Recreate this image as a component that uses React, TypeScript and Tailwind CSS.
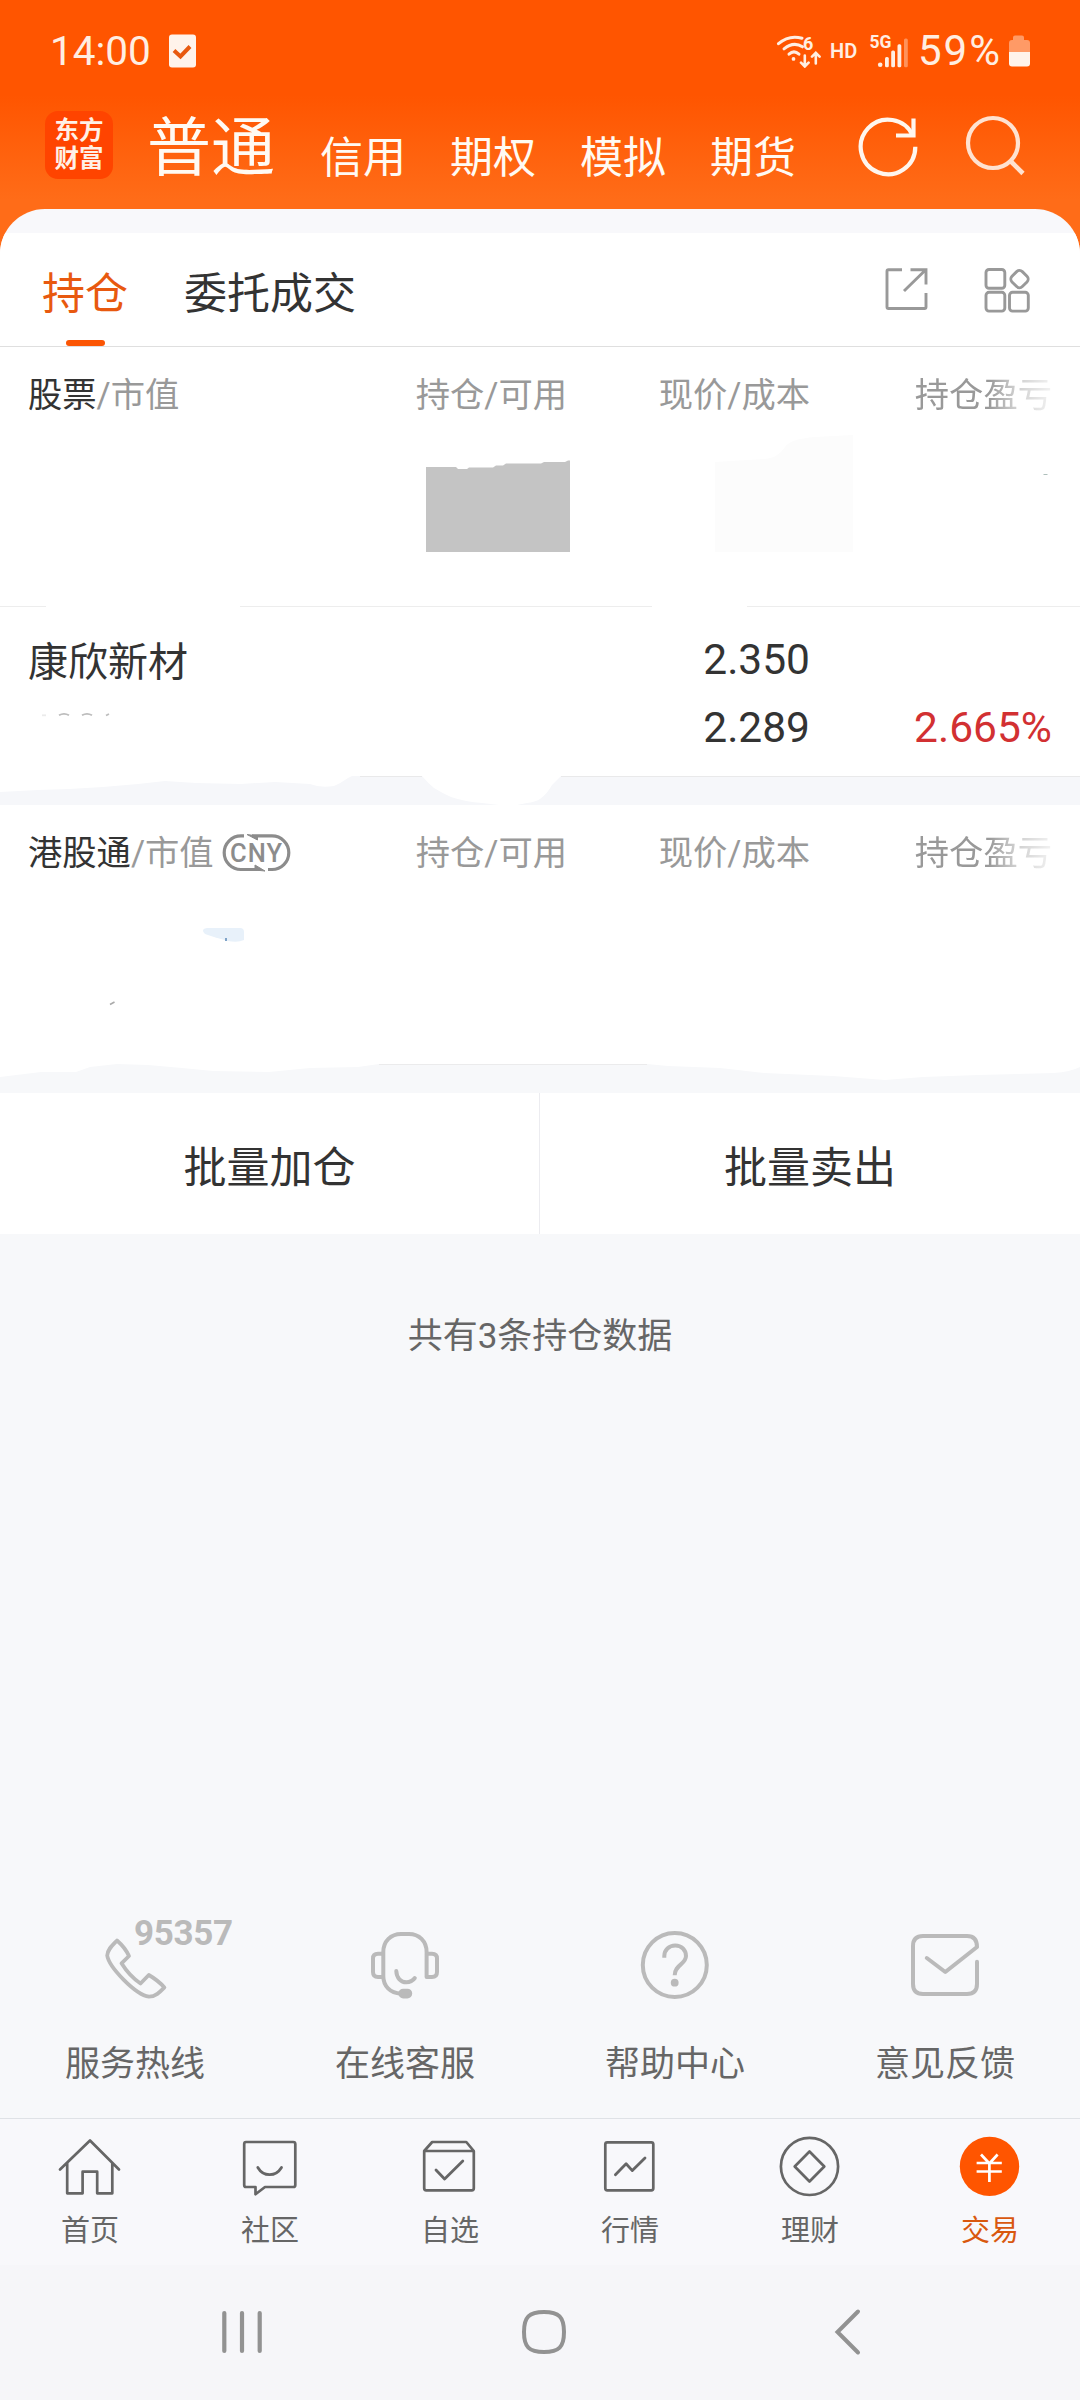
import type { ReactNode } from "react";

const FONT = "font-[Roboto,'Noto_Sans_CJK_SC',sans-serif]";

function StatusBar() {
  return (
    <div className="flex h-[102px] items-center pl-[50px] text-[#ffeee2]">
      <span className="w-[103px] text-[40.500px] leading-[41px] whitespace-nowrap">14:00</span>
      <svg className="ml-[15px]" width="30" height="36" viewBox="0 0 30 36">
        <rect x="1" y="1.500" width="27" height="33" rx="3" fill="#fff3eb" />
        <path d="M6 17.500l6.500 6L22 13.500" fill="none" stroke="#e8590f" strokeWidth="4" />
      </svg>
      <svg className="ml-[578px]" width="46" height="34" viewBox="0 0 46 34" fill="none" stroke="#ffeee2" strokeWidth="3" strokeLinecap="round">
        <path d="M2.500 9.700Q13 .5 26 4.200" />
        <path d="M8 14.900Q17.500 7 26.500 12.800" />
        <path d="M13 20.200Q18 15.600 23 20.200" />
        <circle cx="17.500" cy="24.900" r="1.900" fill="#ffeee2" stroke="none" />
        <path d="M28.800 21.500v10.500M25 28.700l3.800 3.800 3.800-3.800M39.800 29.500V19.500M36 22.700l3.800-3.800 3.800 3.800" strokeWidth="2.600" />
        <text x="27" y="15.500" fontSize="18" fontWeight="700" fill="#ffeee2" stroke="none">6</text>
      </svg>
      <span className="ml-[8px] w-[28px] text-[20px] leading-[20px] font-semibold">HD</span>
      <svg className="ml-[10px] overflow-visible" width="42" height="40" viewBox="0 -3 42 40" fill="#ffeee2">
        <text x="1.500" y="14.300" fontSize="18" fontWeight="700" textLength="22" lengthAdjust="spacingAndGlyphs">5G</text>
        <circle cx="12.200" cy="30.800" r="2.300" />
        <rect x="17" y="23" width="3.800" height="10.300" rx="1.500" />
        <rect x="23.200" y="16.600" width="3.800" height="16.700" rx="1.500" />
        <rect x="29.500" y="10.300" width="3.800" height="23" rx="1.500" />
        <rect x="36" y="4.600" width="3.800" height="28.700" rx="1.500" opacity=".4" />
      </svg>
      <span className="ml-[8px] w-[86px] text-[42px] leading-[42px] tracking-[2px] whitespace-nowrap">59%</span>
      <svg className="ml-[4px]" width="24" height="34" viewBox="0 0 24 34">
        <path d="M7 1.500h7q2 0 2 2V6h3q3 0 3 3v9H1V9q0-3 3-3h1V3.500q0-2 2-2z" fill="#ff9a66" />
        <path d="M1 18h21v11.500q0 3-3 3H4q-3 0-3-3z" fill="#fff3eb" />
      </svg>
    </div>
  );
}

function AccountNav() {
  return (
    <div className="flex h-[107px] items-start pl-[45px] text-[#fffaf3]">
      <div className="mt-[9px] flex h-[68px] w-[68px] flex-col items-center rounded-[13px] bg-[#ff4400] pt-[6px] text-[24.500px] leading-[28px] font-bold text-[#fff0e6]">
        <span>东方</span>
        <span>财富</span>
      </div>
      <span className="mt-[15px] ml-[34px] w-[127px] text-[64px] leading-[64px] whitespace-nowrap">普通</span>
      <div className="mt-[35px] ml-[46px] flex gap-[44px] text-[43px] leading-[43px] whitespace-nowrap">
        <span>信用</span>
        <span>期权</span>
        <span>模拟</span>
        <span>期货</span>
      </div>
      <svg className="mt-[14px] ml-[62px]" width="61" height="61" viewBox="0 0 61 61" fill="none" stroke="#fff6ee" strokeWidth="4.200">
        <path d="M57.300 30.800A27.300 27.300 0 1 1 54.800 19.500" />
        <path d="M55.500 2.500V19.500H38" />
      </svg>
      <svg className="mt-[13px] ml-[46px]" width="61" height="61" viewBox="0 0 61 61" fill="none" stroke="#ffe2d0" strokeWidth="4.200">
        <circle cx="28" cy="28" r="25" />
        <path d="M45.500 46L58 58.500" strokeWidth="4.600" />
      </svg>
    </div>
  );
}

function Tabs() {
  return (
    <div className="flex h-[114px] items-start border-b border-[#dfdfdf] bg-white pr-[47px] pl-[42px] text-[43px] leading-[43px] whitespace-nowrap">
      <div className="flex flex-col items-center pt-[40px] text-[#e8590f]">
        <span>持仓</span>
        <span className="mt-[24px] h-[6px] w-[39px] rounded-full bg-[#fb5504]" />
      </div>
      <span className="mt-[40px] ml-[56px] text-[#333]">委托成交</span>
      <svg className="mt-[34px] ml-auto" width="46" height="46" viewBox="0 0 46 46" fill="none" stroke="#999" strokeWidth="2.900">
        <path d="M18 2.700H4.500Q3 2.700 3 4.200V40Q3 41.500 4.500 41.500H40.500Q42 41.500 42 40V26" />
        <path d="M26.500 2.700H42V17.500M20 24L41.500 3" />
      </svg>
      <svg className="mt-[34px] ml-[54px]" width="49" height="46" viewBox="0 0 49 46" fill="none" stroke="#999" strokeWidth="2.900">
        <rect x="2" y="2.500" width="18.800" height="18.800" rx="3" />
        <rect x="2" y="25.300" width="18.800" height="18.800" rx="3" />
        <rect x="25.500" y="25.300" width="18.800" height="18.800" rx="3" />
        <rect x="28.200" y="4.800" width="14.600" height="14.600" rx="4" transform="rotate(45 35.500 12.100)" />
      </svg>
    </div>
  );
}

function TableHead({ title, children }: { title: string; children?: ReactNode }) {
  return (
    <div className="flex h-[34px] items-center pl-[28px] text-[34.300px] leading-[34px] whitespace-nowrap text-[#999]">
      <span className="flex w-[296px] items-center">
        <span className="text-[#333]">{title}</span>/市值
        {children}
      </span>
      <span className="w-[243px] text-right">持仓/可用</span>
      <span className="w-[243px] text-right">现价/成本</span>
      <span className="flex w-[242px] justify-end">
        <span className="[mask-image:linear-gradient(to_right,black_54%,rgba(0,0,0,0.5)_72%,rgba(0,0,0,0.12))]">持仓盈亏</span>
      </span>
    </div>
  );
}

function CnyBadge() {
  return (
    <svg className="ml-[8px] shrink-0" width="70" height="38" viewBox="0 0 70 38">
      <g fill="none" stroke="#8c8c8c" strokeWidth="3.200">
        <path d="M22 1.900H19A16.800 16.800 0 0 0 19 35.500H39" />
        <path d="M30 1.900H50A16.800 16.800 0 0 1 50 35.500H46" />
      </g>
      <path d="M25 .5L35.500 6V2zM43 37L33 31v5z" fill="#8c8c8c" stroke="#8c8c8c" />
      <text x="8" y="27.800" fontSize="25.500" fontWeight="500" textLength="52" fill="#8c8c8c">CNY</text>
    </svg>
  );
}

function StockSection() {
  return (
    <section className="bg-white">
      <div className="relative h-[259px] pt-[31px]">
        <TableHead title="股票" />
        <svg className="absolute top-0 left-0" width="1080" height="259" viewBox="0 347 1080 259">
          <path d="M426 467H456L458 469H467L469 467.500H493L496 465.500H503L506 463.500H541L544 462H565L568 460.500H570V552H426z" fill="#c4c4c4" />
          <path d="M715 462L765 459Q778 458 785 447Q790 439 815 437L853 435V552H715z" fill="#fcfcfc" />
          <path d="M1043.500 474.500h4" stroke="#aebfbb" strokeWidth="1" />
        </svg>
      </div>
      <div className="flex h-px">
        <span className="w-[46px] bg-[#ededed]" />
        <span className="ml-[194px] w-[412px] bg-[#ededed]" />
        <span className="ml-[95px] flex-1 bg-[#ededed]" />
      </div>
      <div className="flex h-[169px] items-start pl-[28px] text-[#333]">
        <div className="w-[539px] pt-[36px]">
          <div className="text-[40px] leading-[40px]">康欣新材</div>
          <svg className="mt-[29px] ml-[8px]" width="90" height="6" viewBox="0 0 90 6" fill="none" stroke="#bdbdbd" strokeWidth="1.800">
            <path d="M6 3.300h4" opacity=".3" />
            <path d="M23 3.300Q28 .3 33 3.300M46 3.300Q51 .3 56 3.300M70 3.500l3-1.500" />
          </svg>
        </div>
        <div className="mt-[19px] w-[243px] text-right text-[42.500px] leading-[68px]">
          <div>2.350</div>
          <div>2.289</div>
        </div>
        <div className="mt-[87px] w-[242px] text-right text-[42.500px] leading-[68px] text-[#d23032]">2.665%</div>
      </div>
      <svg className="block" width="1080" height="29" viewBox="0 776 1080 29">
        <path
          d="M0 792L38 790L69 789L103 787L138 784L165 781L196 783L241 784L275 782L310 784Q320 788 334 786Q341 783 348 778L352 776H422Q428 783 434 788Q442 793 451 797Q466 802 482 803L499 805H517L527 803Q535 802 540 799Q547 794 552 785L561 776H1080V805H0z"
          fill="#f6f7fa"
        />
        <path d="M360 776.500H422M561 776.500H1080" stroke="#e9e9ea" strokeWidth="1" />
      </svg>
    </section>
  );
}

function HongKongSection() {
  return (
    <section className="bg-white">
      <div className="relative h-[259px] pt-[31px]">
        <TableHead title="港股通">
          <CnyBadge />
        </TableHead>
        <svg className="absolute top-[60px] left-0" width="300" height="160" viewBox="0 865 300 160">
          <path d="M207 928H240Q244 928 244 932V940Q238 943 228 941Q213 937 205 934Q200 929 207 928z" fill="#e8f1fa" />
          <path d="M226 938v3" stroke="#7fa3c8" strokeWidth="2" />
          <path d="M110 1004.500l4.500-2.500" stroke="#aaa" strokeWidth="1.600" />
        </svg>
      </div>
      <svg className="block" width="1080" height="29" viewBox="0 1064 1080 29">
        <path
          d="M0 1077L41 1072L76 1072L90 1067L117 1064L148 1065L182 1068L213 1071L269 1072L310 1068L358 1067L379 1064H647L668 1066L720 1068L764 1073L833 1076L885 1080L923 1077L978 1075L1054 1073Q1070 1072 1080 1067V1093H0z"
          fill="#f7f8fa"
        />
        <path d="M379 1064.500H647" stroke="#ebebec" strokeWidth="1" />
      </svg>
    </section>
  );
}

function BatchActions() {
  return (
    <div className="flex h-[141px] bg-white text-[43px] leading-[43px] text-[#333]">
      <div className="flex w-[540px] items-center justify-center border-r border-[#ececf0] pt-[10px]">批量加仓</div>
      <div className="flex w-[540px] items-center justify-center pt-[10px]">批量卖出</div>
    </div>
  );
}

const services = [
  {
    label: "服务热线",
    icon: (
      <path d="M17 10.500C21 14 26.500 20.500 29 26L21.500 33.300C26 40.500 33 48.500 40.500 53.500L48.800 45C54 48 60 52.500 64.400 57.500C60 62 55.500 66.700 49 66.700C35 64.500 9 37 7.200 25.500C7.500 19.500 12 15.500 17 10.500z" strokeWidth="3.800" />
    ),
  },
  {
    label: "在线客服",
    icon: (
      <>
        <path d="M13.300 24V22C13.300 11 21 3.900 31 3.900H39C49 3.900 56.600 11 56.600 22V47H62Q67 47 67 42V28.500Q67 23.700 62 23.700H57M13.300 22V46C13.300 56 20 63 31 63.700M13 23.700H8Q3 23.700 3 28.500V42Q3 47 8 47H13" />
        <path d="M26.300 41C26.500 48 31 52.300 36.300 52.300C40 52.300 43 50.500 44.800 48" />
        <rect x="28.400" y="58.700" width="13.800" height="9.800" rx="4.800" fill="#bababa" stroke="none" />
      </>
    ),
  },
  {
    label: "帮助中心",
    icon: (
      <>
        <circle cx="34.800" cy="35" r="32" />
        <path d="M24.300 27.800V26C24.300 20 29 15.500 35.300 15.500C41.500 15.500 46 20 46 26C46 34.500 34.700 34.500 34.700 45.300" strokeLinecap="butt" />
        <circle cx="34.700" cy="52.700" r="3.900" fill="#bababa" stroke="none" />
      </>
    ),
  },
  {
    label: "意见反馈",
    icon: (
      <path d="M67 31.700V54Q67 64 57 64H13Q3 64 3 54V16Q3 6 13 6H57Q67 6 67 17L35.300 42L16.800 28" />
    ),
  },
];

function Services() {
  return (
    <div className="mt-auto grid grid-cols-4 pb-[36px]">
      {services.map((s, i) => (
        <div key={s.label} className="flex flex-col items-center">
          <div className="relative h-[70px] w-[70px]">
            <svg width="70" height="70" viewBox="0 0 70 70" fill="none" stroke="#bababa" strokeWidth="4" strokeLinecap="round" strokeLinejoin="round">
              {s.icon}
            </svg>
            {i === 0 && (
              <span className="absolute -top-[14px] left-[34px] text-[35px] leading-[35px] font-bold tracking-[-0.3px] text-[#bababa]">95357</span>
            )}
          </div>
          <span className="mt-[47px] text-[35px] leading-[35px] text-[#666]">{s.label}</span>
        </div>
      ))}
    </div>
  );
}

const tabs = [
  {
    label: "首页",
    icon: <path d="M2 35.500L32 6.500L61 35.500M9.200 29V59.300H24.600V37.700H39.200V59.300H54.300V29" />,
  },
  {
    label: "社区",
    icon: (
      <>
        <path d="M8 8H55.300Q57.300 8 57.300 10V51Q57.300 53 55.300 53H27L17.500 60.300V53H8Q6.200 53 6.200 51V10Q6.200 8 8 8z" />
        <path d="M19.800 33.500Q24 40.700 31.600 40.700T43.500 33.500" strokeWidth="2.800" />
      </>
    ),
  },
  {
    label: "自选",
    icon: (
      <>
        <path d="M6.200 17L14.200 8H48.300L55.800 17V54.300Q55.800 56.300 53.800 56.300H8.200Q6.200 56.300 6.200 54.300zM6.200 17H55.800" />
        <path d="M18 36L26.600 45L44.800 27" strokeWidth="2.800" />
      </>
    ),
  },
  {
    label: "行情",
    icon: (
      <>
        <rect x="7.300" y="8.300" width="48" height="48" rx="2" />
        <path d="M17.400 40.700L28.100 29.800L34.300 36.600L47 24" strokeWidth="2.800" />
      </>
    ),
  },
  {
    label: "理财",
    icon: (
      <>
        <circle cx="31.500" cy="32.400" r="28.600" />
        <path d="M31.500 17.500L46.300 32.500L31.500 47.500L16.700 32.500z" />
      </>
    ),
  },
  {
    label: "交易",
    active: true,
    icon: (
      <>
        <circle cx="31.500" cy="32.400" r="29.700" fill="#ff5500" stroke="none" />
        <path d="M23 20.500L31.400 29.500L39.600 20.500M31.400 29V48M18.600 29H43.800M18.600 37.500H43.800" stroke="#fff" strokeLinecap="butt" />
      </>
    ),
  },
];

function TabBar() {
  return (
    <div className="grid h-[147px] grid-cols-6 border-t border-[#dfe2e6] bg-[#f8f8fb] pt-[15px]">
      {tabs.map((t) => (
        <div key={t.label} className="flex flex-col items-center">
          <svg width="64" height="64" viewBox="0 0 64 64" fill="none" stroke="#666" strokeWidth="2.700" strokeLinecap="round" strokeLinejoin="round">
            {t.icon}
          </svg>
          <span className={t.active ? "mt-[19px] text-[29px] leading-[29px] text-[#d9580f]" : "mt-[19px] text-[29px] leading-[29px] text-[#666]"}>{t.label}</span>
        </div>
      ))}
    </div>
  );
}

function SystemNav() {
  return (
    <div className="flex h-[135px] items-center bg-[#f6f6f9] pb-[2px] pl-[218px]">
      <svg width="48" height="48" viewBox="0 0 48 48" fill="none" stroke="#929292" strokeWidth="4.200" strokeLinecap="round">
        <path d="M6.300 5V43M24 5V43M41.700 5V43" />
      </svg>
      <svg className="ml-[254px]" width="48" height="48" viewBox="0 0 48 48" fill="none" stroke="#929292" strokeWidth="4">
        <path d="M24 4C39 4 44 9 44 24S39 44 24 44S4 39 4 24S9 4 24 4z" />
      </svg>
      <svg className="ml-[256px]" width="48" height="48" viewBox="0 0 48 48" fill="none" stroke="#929292" strokeWidth="4" strokeLinecap="round">
        <path d="M34 3.500L13.500 24L34 44.500" />
      </svg>
    </div>
  );
}

export default function App() {
  return (
    <div className={`flex h-[2400px] w-[1080px] flex-col overflow-hidden bg-[#f7f8fa] ${FONT}`}>
      <header className="bg-[linear-gradient(to_bottom,#ff5500_0px,#ff5500_95px,#ff6c18_200px)]">
        <StatusBar />
        <AccountNav />
      </header>
      <div className="bg-[#ff6c18]">
        <div className="overflow-hidden rounded-t-[45px] bg-[#f8f8fb] pt-[24px]">
          <Tabs />
        </div>
      </div>
      <StockSection />
      <HongKongSection />
      <BatchActions />
      <p className="mt-[85px] text-center text-[35px] leading-[35px] text-[#666]">共有3条持仓数据</p>
      <Services />
      <TabBar />
      <SystemNav />
    </div>
  );
}
